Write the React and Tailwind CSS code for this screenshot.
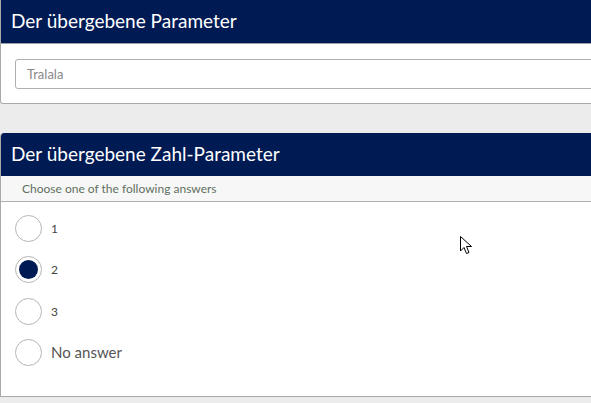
import React, { useState } from 'react';

const font = { fontFamily: 'Lato, "Open Sans", sans-serif' };

function Radio({ checked, onClick }) {
  return (
    <button
      onClick={onClick}
      className="w-[27px] h-[27px] rounded-full border border-[#b5b5b5] bg-white flex items-center justify-center shrink-0"
    >
      {checked && <span className="w-[19px] h-[19px] rounded-full bg-[#001a54]" />}
    </button>
  );
}

export default function App() {
  const [value, setValue] = useState('2');
  const options = [
    { id: '1', label: '1', small: true },
    { id: '2', label: '2', small: true },
    { id: '3', label: '3', small: true },
    { id: 'none', label: 'No answer', small: false },
  ];

  return (
    <div className="w-[620px] h-[403px] bg-[#ececec] overflow-hidden relative" style={font}>
      {/* Text parameter */}
      <div className="bg-white border-x border-b border-[#a9a9a9] rounded-b-[3px]">
        <div className="h-[44px] bg-[#001a54] flex items-center px-[10px] border-b border-[#9aa0a8]">
          <h2 className="text-[19px] text-white">Der übergebene Parameter</h2>
        </div>
        <div className="pt-[15px] pb-[14px] pl-[14px]">
          <input
            type="text"
            placeholder="Tralala"
            className="w-full h-[30px] rounded-[3px] border border-[#b0b0b0] px-[11px] text-[13px] text-[#555] placeholder-[#888] outline-none"
          />
        </div>
      </div>

      {/* Number parameter */}
      <div className="mt-[29px] bg-white border-x border-b border-[#a9a9a9] rounded-t-[4px] overflow-hidden">
        <div className="h-[43px] bg-[#001a54] flex items-center px-[10px]">
          <h2 className="text-[19px] text-white">Der übergebene Zahl-Parameter</h2>
        </div>
        <div className="h-[26px] bg-[#f7f7f7] border-b border-[#b0b0b0] flex items-center px-[21px]">
          <span className="text-[12px] text-[#5f705f]">Choose one of the following answers</span>
        </div>
        <div className="flex flex-col gap-[14px] pt-[13px] pb-[30px] pl-[14px]">
          {options.map((o, i) => (
            <label key={o.id} className={`flex items-center gap-[9px] cursor-pointer ${i === 2 ? 'mt-px' : ''}`}>
              <Radio checked={value === o.id} onClick={() => setValue(o.id)} />
              <span className={o.small ? 'text-[12px] text-[#444]' : 'text-[15px] text-[#555]'}>{o.label}</span>
            </label>
          ))}
        </div>
      </div>

      {/* mouse cursor */}
      <svg className="absolute left-[460px] top-[236px]" width="13" height="20" viewBox="0 0 13 20">
        <path d="M0.5 0.5 L0.5 15 L4 11.5 L6.5 17.5 L9 16.5 L6.5 10.5 L11.5 10.5 Z" fill="white" stroke="black" strokeWidth="1" />
      </svg>
    </div>
  );
}
